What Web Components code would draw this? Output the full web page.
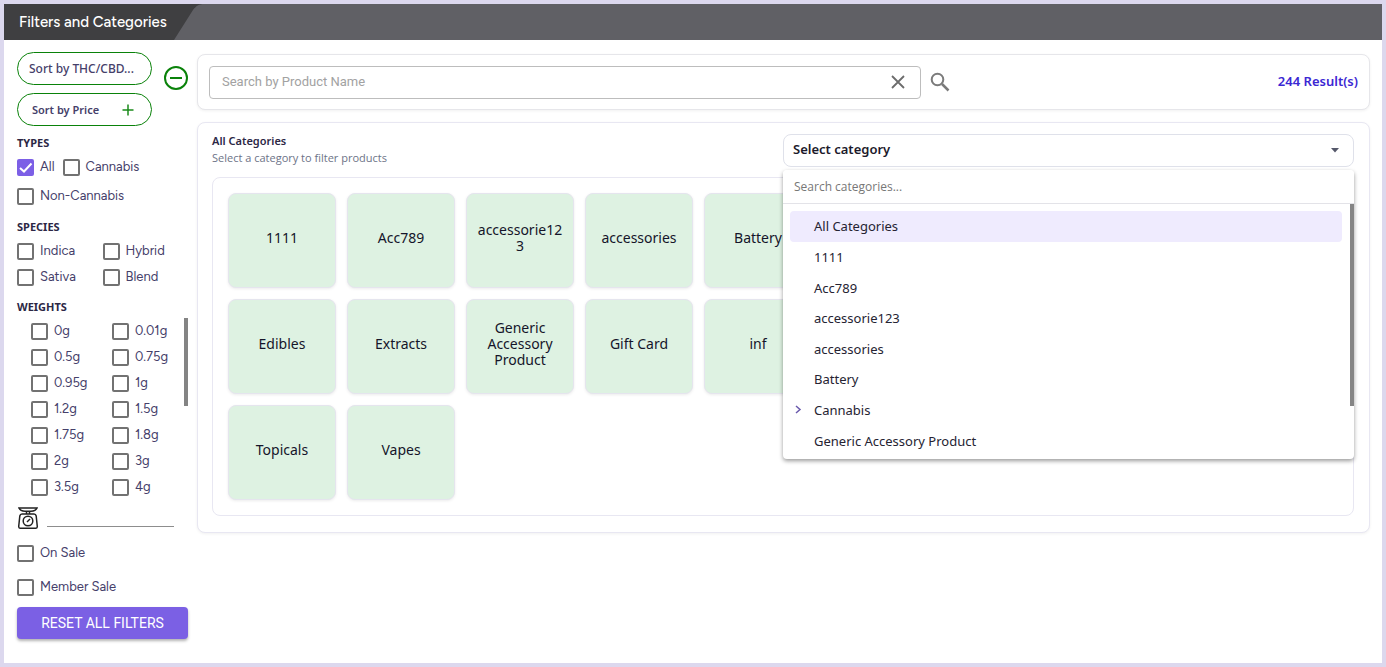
<!DOCTYPE html>
<html lang="en">
<head>
<meta charset="utf-8">
<title>Filters and Categories</title>
<style>
  body {
    margin: 0;
    background: #fff;
    color: #45406a;
    font-family: "Noto Sans", sans-serif;
    font-size: 13px;
  }
</style>
</head>
<body>
<filter-page></filter-page>
<script>
(()=>{

const base = `
  * { box-sizing: border-box; }
  button, input, select { font: inherit; color: inherit; margin: 0; }
  button { cursor: pointer; }
  svg { display: block; }
`;

function define (name, render, after) {
  customElements.define(name, class extends HTMLElement {
    constructor () {
      super();
      this.attachShadow({mode:"open"});
    }
    connectedCallback () {
      this.shadowRoot.innerHTML = `<style>${base}</style>` + render(this);
      if (after) {
        after(this, this.shadowRoot);
      }
    }
  });
}

define("page-header", () => `
  <style>
    :host { display: flex; height: 36px; background: #606065; color: #fff; }
    h1 {
      margin: 0;
      padding: 0 0 0 15px;
      background: #3f3f41;
      font: 500 15px/37px "Figtree", "Lato", sans-serif;
      min-width: 170px;
      white-space: nowrap;
    }
  </style>
  <h1><slot></slot></h1>
  <svg width="30" height="36" viewBox="0 0 30 36"><path d="M0 0H30C25 0 22 2 19 6L0 36Z" fill="#3f3f41"/></svg>
`);

define("check-box", (el) => `
  <style>
    :host { display: block; }
    label { display: flex; align-items: center; gap: 6px; height: 26px; font: 13px/16px "Figtree", "Inter", sans-serif; white-space: nowrap; cursor: pointer; }
    span { position: relative; flex: none; width: 17px; height: 17px; }
    slot { display: block; }
    input {
      display: block;
      appearance: none;
      width: 17px;
      height: 17px;
      border: 2px solid #727272;
      border-radius: 2px;
      background: #fff;
    }
    input:checked { background: #7c5fe6; border-color: #7c5fe6; }
    svg { position: absolute; inset: 0; pointer-events: none; display: none; }
    input:checked + svg { display: block; }
  </style>
  <label>
    <span>
      <input type="checkbox" ${el.hasAttribute("checked") ? "checked" : ""}>
      <svg viewBox="0 0 17 17"><path d="M3 9L7 12.500L14.500 4.500" fill="none" stroke="#fff" stroke-width="2"/></svg>
    </span>
    <slot></slot>
  </label>
`);

define("sort-button", (el) => `
  <style>
    :host { display: block; }
    button {
      display: flex;
      align-items: center;
      justify-content: space-between;
      width: 100%;
      height: 33px;
      padding: 0 16px 0 11px;
      border: 1px solid #0a820a;
      border-radius: 17px;
      background: #fff;
      font: 500 12px/16px "Noto Sans", sans-serif;
      white-space: nowrap;
    }
    button.plus { padding-left: 14px; font: 600 11px/16px "Noto Sans", sans-serif; }
  </style>
  <button type="button" class="${el.hasAttribute("plus") ? "plus" : ""}">
    <slot></slot>
    ${el.hasAttribute("plus") ? `<svg width="14" height="14" viewBox="0 0 14 14"><path d="M7 1.500V12.500M1.500 7H12.500" stroke="#1a8a1a" stroke-width="1.500"/></svg>` : ""}
  </button>
`);

const weights = ["0g","0.01g","0.5g","0.75g","0.95g","1g","1.2g","1.5g","1.75g","1.8g","2g","3g","3.5g","4g"];

define("filter-sidebar", () => `
  <style>
    :host { display: block; padding-top: 12px; }
    .sorts { display: flex; align-items: center; justify-content: space-between; }
    .pills { display: grid; grid-template-columns: 135px; gap: 8px; }
    .collapse { padding: 0; border: 0; background: none; margin-bottom: 22px; }
    h2 { margin: 9px 0 3px; font: 700 11px/16px "Noto Sans", sans-serif; color: #2c2745; }
    .types { display: flex; flex-wrap: wrap; gap: 3px 8px; padding-bottom: 1px; }
    .species { display: grid; grid-template-columns: 1fr 1fr; }
    .weights { display: flex; justify-content: space-between; }
    .list { flex: 1; display: grid; grid-template-columns: 81px 1fr; padding-left: 14px; }
    .thumb { width: 4px; height: 88px; background: #848484; }
    .scale { display: flex; gap: 8px; margin: 7px 14px 11px 0; }
    .scale input { flex: 1; min-width: 0; height: 20px; padding: 0; border: 0; border-bottom: 1px solid #8d8d8d; border-radius: 0; background: none; outline: 0; }
    .sale { display: grid; gap: 8px; }
    .reset {
      display: block;
      width: 100%;
      height: 32px;
      margin-top: 7px;
      padding: 0;
      border: 0;
      border-radius: 4px;
      background: #7b60e4;
      color: #fff;
      font: 14px/30px "Roboto", sans-serif;
      box-shadow: 0 2px 3px rgba(0,0,0,.3);
    }
  </style>
  <div class="sorts">
    <div class="pills">
      <sort-button>Sort by THC/CBD...</sort-button>
      <sort-button plus>Sort by Price</sort-button>
    </div>
    <button class="collapse" type="button" aria-label="Collapse">
      <svg width="24" height="26" viewBox="0 0 24 26"><circle cx="12" cy="13" r="11" fill="none" stroke="#0a820a" stroke-width="2"/><path d="M6 13H18" stroke="#0a820a" stroke-width="2"/></svg>
    </button>
  </div>
  <h2>TYPES</h2>
  <div class="types">
    <check-box checked>All</check-box>
    <check-box>Cannabis</check-box>
    <check-box>Non-Cannabis</check-box>
  </div>
  <h2>SPECIES</h2>
  <div class="species">
    <check-box>Indica</check-box>
    <check-box>Hybrid</check-box>
    <check-box>Sativa</check-box>
    <check-box>Blend</check-box>
  </div>
  <h2>WEIGHTS</h2>
  <div class="weights">
    <div class="list">${weights.map(w => `<check-box>${w}</check-box>`).join("")}</div>
    <div class="thumb"></div>
  </div>
  <div class="scale">
    <svg width="22" height="22" viewBox="0 0 22 22" fill="none" stroke="#222" stroke-width="1.500">
      <path d="M2 1H20C19 3.500 16 4.200 14 4.200H8C6 4.200 3 3.500 2 1Z"/>
      <path d="M9.500 4.500V7M12.500 4.500V7M5 7H17C18.500 7 19 8 19.200 9L20.300 19.500C20.300 20.800 19.800 21.200 19 21.200H3C2.200 21.200 1.700 20.800 1.700 19.500L2.800 9C3 8 3.500 7 5 7Z"/>
      <circle cx="11" cy="14" r="4.800"/>
      <path d="M10 15L13 12"/>
    </svg>
    <input type="text" aria-label="Weight">
  </div>
  <div class="sale">
    <check-box>On Sale</check-box>
    <check-box>Member Sale</check-box>
  </div>
  <button class="reset" type="button">RESET ALL FILTERS</button>
`);

define("product-search", () => `
  <style>
    :host {
      display: flex;
      align-items: center;
      padding: 11px 11px 10px;
      border: 1px solid #e6e6ea;
      border-radius: 8px;
      background: #fff;
      box-shadow: 0 1px 3px rgba(0,0,0,.06);
    }
    .box { display: flex; align-items: center; width: 62%; height: 33px; padding: 0 14px 2px 12px; border: 1px solid #bdbdbd; border-radius: 4px; }
    input { flex: 1; min-width: 0; height: 20px; padding: 0; border: 0; outline: 0; background: none; font: 13px/16px "Roboto", sans-serif; }
    input::placeholder { color: #a2a2a2; }
    button { padding: 0; border: 0; background: none; }
    .find { margin-left: 8px; }
    output { margin-left: auto; padding-bottom: 3px; color: #3b27d3; font: 600 13px/18px "Noto Sans", sans-serif; }
  </style>
  <div class="box">
    <input type="text" placeholder="Search by Product Name" aria-label="Search by Product Name">
    <button type="button" aria-label="Clear"><svg width="16" height="16" viewBox="0 0 16 16"><path d="M2 2L14 14M14 2L2 14" stroke="#6c6c6c" stroke-width="1.800"/></svg></button>
  </div>
  <button class="find" type="button" aria-label="Search"><svg width="22" height="22" viewBox="0 0 22 22" fill="none" stroke="#7b7b7b"><circle cx="8.500" cy="7.500" r="5.800" stroke-width="2"/><path d="M13 12L19.500 18.500" stroke-width="2.500"/></svg></button>
  <output><slot></slot></output>
`);

define("category-tile", () => `
  <style>
    :host { display: block; }
    button {
      display: block;
      width: 100%;
      height: 95px;
      padding: 0 10px 6px;
      border: 1px solid #e5e5ee;
      border-radius: 8px;
      background: #def2e2;
      color: #15152a;
      font: 14px/16px "Noto Sans", sans-serif;
      overflow-wrap: anywhere;
      box-shadow: 0 1px 3px rgba(0,0,0,.08);
    }
  </style>
  <button type="button"><slot></slot></button>
`);

define("category-option", (el) => `
  <style>
    :host { display: block; }
    button {
      display: flex;
      align-items: center;
      width: 100%;
      height: 100%;
      padding: 0;
      border: 0;
      border-radius: 4px;
      background: none;
      color: #252332;
      text-align: left;
      font: 13px/18px "Noto Sans", sans-serif;
    }
    :host([active]) button { background: #efebfe; }
    i { flex: none; width: 24px; }
    svg { margin-left: 4px; }
  </style>
  <button type="button">
    <i>${el.hasAttribute("branch") ? `<svg width="8" height="12" viewBox="0 0 8 12"><path d="M2 2L6 5.500L2 9" fill="none" stroke="#6a5aad" stroke-width="1.500"/></svg>` : ""}</i>
    <slot></slot>
  </button>
`);

define("category-select", () => `
  <style>
    :host { display: block; position: relative; }
    .field { position: relative; }
    select {
      display: block;
      appearance: none;
      width: 100%;
      height: 33px;
      padding: 0 30px 3px 9px;
      border: 1px solid #dfe1ea;
      border-radius: 8px;
      background: #fff;
      color: #1c1a2b;
      font: 600 13px/18px "Noto Sans", sans-serif;
    }
    .field svg { position: absolute; right: 15px; top: 14px; pointer-events: none; }
    .menu {
      position: absolute;
      z-index: 2;
      top: 36px;
      left: 0;
      right: 0;
      border-radius: 4px;
      background: #fff;
      box-shadow: 0 2px 4px rgba(0,0,0,.4);
    }
    .menu > input { display: block; width: 100%; height: 34px; padding: 0 11px; border: 0; border-bottom: 1px solid #e3e3e8; outline: 0; border-radius: 4px 4px 0 0; background: #fff; font: 12px/16px "Open Sans", sans-serif; }
    input::placeholder { color: #777; }
    .body { display: flex; }
    .options { flex: 1; display: grid; grid-auto-rows: 1fr; height: 245px; margin: 7px 8px 3px 7px; }
    .thumb { width: 4px; height: 202px; background: #858585; }
  </style>
  <div class="field">
    <select aria-label="Category"><option>Select category</option></select>
    <svg width="8" height="5" viewBox="0 0 8 5"><path d="M0 0H8L4 4.500Z" fill="#55586a"/></svg>
  </div>
  <div class="menu">
    <input type="text" placeholder="Search categories..." aria-label="Search categories">
    <div class="body">
      <div class="options"><slot></slot></div>
      <div class="thumb"></div>
    </div>
  </div>
`, (el) => {
  el.addEventListener("click", (e) => {
    let target = e.target.closest("category-option");
    if (target) {
      Array.from(el.children).map(n => n.removeAttribute("active"));
      target.setAttribute("active","");
    }
  });
});

// the tiles sit in columns of one width, a row break starts at the first column
const tiles = [
  ["1111","Acc789","accessorie123","accessories","Battery"],
  ["Edibles","Extracts","Generic Accessory Product","Gift Card","inf"],
  ["Topicals","Vapes"]
];

define("category-panel", () => `
  <style>
    :host {
      display: block;
      padding: 11px 15px 16px 14px;
      border: 1px solid #e8e7f2;
      border-radius: 8px;
      background: #fff;
      box-shadow: 0 1px 3px rgba(0,0,0,.06);
    }
    header { display: flex; justify-content: space-between; }
    h2 { margin: 0; font: 600 11px/14px "Noto Sans", sans-serif; color: #2c2745; }
    p { margin: 0; font: 11px/19px "Open Sans", sans-serif; color: #6d7387; }
    category-select { width: 50%; }
    .tiles { display: grid; grid-template-columns: repeat(auto-fill, 108px); gap: 11px; margin-top: 10px; padding: 15px; border: 1px solid #e8e7f2; border-radius: 8px; }
    .first { grid-column: 1; }
  </style>
  <header>
    <div>
      <h2>All Categories</h2>
      <p>Select a category to filter products</p>
    </div>
    <category-select>
      <category-option active>All Categories</category-option>
      <category-option>1111</category-option>
      <category-option>Acc789</category-option>
      <category-option>accessorie123</category-option>
      <category-option>accessories</category-option>
      <category-option>Battery</category-option>
      <category-option branch>Cannabis</category-option>
      <category-option>Generic Accessory Product</category-option>
    </category-select>
  </header>
  <div class="tiles">${tiles.map(row => row.map((t,i) => `<category-tile class="${i ? "" : "first"}">${t}</category-tile>`).join("")).join("")}</div>
`);

define("filter-page", () => `
  <style>
    :host { display: block; min-height: 100vh; border: 4px solid #dcd8ee; box-sizing: border-box; }
    .columns { display: flex; gap: 9px; padding: 0 12px 0 13px; }
    filter-sidebar { flex: none; width: 171px; }
    main { flex: 1; min-width: 0; display: grid; gap: 12px; align-content: start; padding-top: 14px; }
  </style>
  <page-header>Filters and Categories</page-header>
  <div class="columns">
    <filter-sidebar></filter-sidebar>
    <main>
      <product-search>244 Result(s)</product-search>
      <category-panel></category-panel>
    </main>
  </div>
`);

})();
</script>
</body>
</html>
